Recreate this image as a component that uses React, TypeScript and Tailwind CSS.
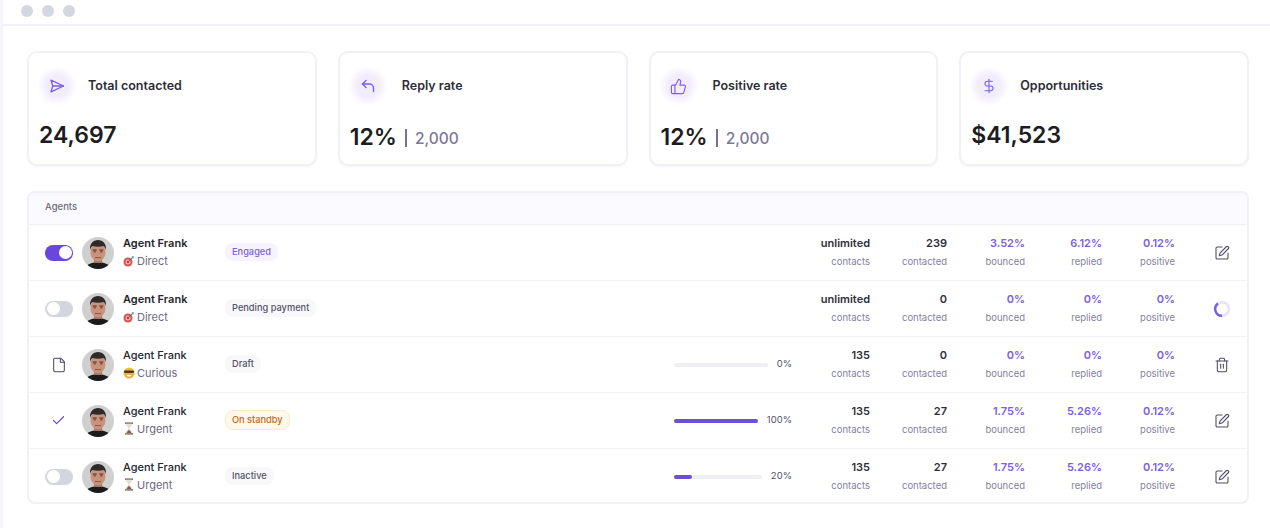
import { Check, DollarSign, File, SquarePen, ThumbsUp, Trash2 } from "lucide-react"
import type { ReactNode } from "react"

function Avatar() {
  return (
    <svg width="32" height="32" viewBox="0 0 32 32" className="shrink-0">
      <defs>
        <clipPath id="avatar-clip">
          <circle cx="16" cy="16" r="16" />
        </clipPath>
      </defs>
      <g clipPath="url(#avatar-clip)">
        <rect width="32" height="32" fill="#cfcfcf" />
        <path d="M3 32c1-5 8-7 13-7s12 2 13 7z" fill="#1b1b1e" />
        <rect x="12" y="20" width="8" height="6" fill="#a87560" />
        <ellipse cx="16" cy="15" rx="7.500" ry="9.500" fill="#c8927c" />
        <path d="M8.200 13c-1-6 3-10 7.800-10s8.800 4 7.800 10c-.6-2.300-1.300-3.500-2.600-3.900-3 .7-7.400.7-10.400 0-1.300.4-2 1.600-2.600 3.900z" fill="#2f2a27" />
        <rect x="10.800" y="12.500" width="3.800" height="1.100" fill="#4a3029" />
        <rect x="17.400" y="12.500" width="3.800" height="1.100" fill="#4a3029" />
        <rect x="11.500" y="14.300" width="2.400" height="1" fill="#5c3d33" />
        <rect x="18.100" y="14.300" width="2.400" height="1" fill="#5c3d33" />
        <rect x="13" y="20.200" width="6" height="0.900" fill="#8a4f45" />
      </g>
    </svg>
  )
}

function Dart() {
  return (
    <svg width="12" height="12" viewBox="0 0 12 12" className="shrink-0">
      <circle cx="5" cy="7" r="4.500" fill="#d9534f" />
      <circle cx="5" cy="7" r="2.500" fill="#f2b8b5" />
      <circle cx="5" cy="7" r="1.300" fill="#c73a36" />
      <path d="M5 7l4.500-4.500" stroke="#55606a" strokeWidth="0.9" />
      <path d="M9 1l2 .5-.8 2.300-1.700-.6z" fill="#3fb6c4" />
    </svg>
  )
}

function Cool() {
  return (
    <svg width="12" height="12" viewBox="0 0 12 12" className="shrink-0">
      <circle cx="6" cy="6" r="5.500" fill="#f5b83d" />
      <rect x="1" y="3.500" width="10" height="2.600" rx="1" fill="#4a3a20" />
      <path d="M3 7.500h6c0 1.500-1.300 2.500-3 2.500S3 9 3 7.500z" fill="#fff" stroke="#9a6a1c" strokeWidth="0.4" />
    </svg>
  )
}

function Hourglass() {
  return (
    <svg width="12" height="13" viewBox="0 0 12 13" className="shrink-0">
      <rect x="2" y="0.500" width="8" height="1.300" fill="#6b5348" />
      <rect x="2" y="11.200" width="8" height="1.300" fill="#6b5348" />
      <path d="M3 1.800h6c0 2.500-2 3.500-2.400 4.700.4 1.200 2.400 2.200 2.400 4.700H3c0-2.500 2-3.500 2.400-4.700C5 5.300 3 4.300 3 1.800z" fill="#e6e0da" />
      <path d="M3.500 11.200c.2-1.600 1.700-2.600 2.500-3.300.8.700 2.300 1.700 2.500 3.300z" fill="#8d5a3c" />
    </svg>
  )
}

function Spinner() {
  return (
    <svg width="18" height="18" viewBox="0 0 18 18">
      <circle cx="9" cy="9" r="6.800" fill="none" stroke="#e6e0f8" strokeWidth="2.400" />
      <path d="M9 15.800A6.800 6.800 0 0 1 5 3.500" fill="none" stroke="#7a5fe0" strokeWidth="2.400" />
    </svg>
  )
}

function PlaneIcon() {
  return (
    <svg width="16" height="16" viewBox="0 0 16 16" fill="none" stroke="currentColor" strokeWidth="1.300" strokeLinejoin="round" strokeLinecap="round">
      <path d="M2 2.200L14.500 8 2 13.800 3.800 8z" />
      <path d="M3.800 8h10.700" />
    </svg>
  )
}

function ReplyIcon() {
  return (
    <svg width="16" height="16" viewBox="0 0 16 16" fill="none" stroke="currentColor" strokeWidth="1.400" strokeLinejoin="round" strokeLinecap="round">
      <path d="M6 2.500L2.500 6 6 9.500" />
      <path d="M2.500 6h7a4 4 0 0 1 4 4v3.500" />
    </svg>
  )
}

function Toggle({ on }: { on?: boolean }) {
  return (
    <div className={`flex h-[16px] w-[28px] items-center rounded-full px-[1.500px] ${on ? "justify-end bg-[#6b46dc]" : "justify-start bg-[#d3d6de]"}`}>
      <div className="h-[13px] w-[13px] rounded-full bg-white" />
    </div>
  )
}

function StatCard({ icon, title, titleClass, value, extra }: { icon: ReactNode; title: string; titleClass: string; value: string; extra?: string }) {
  return (
    <div className="h-[115px] rounded-[10px] border-2 border-[#f2f0f7] bg-white pl-[10px] pt-[13px] shadow-[0_1px_2px_rgba(90,80,140,0.06)]">
      <div className="-ml-[2px] flex items-center">
        <div className="flex h-[40px] w-[40px] items-center justify-center rounded-full bg-[radial-gradient(circle_closest-side,#f2edfd_55%,#ffffff_100%)] text-[#7a5fe8]">
          {icon}
        </div>
        <div className={`text-[12.500px] font-semibold text-[#2d2d38] ${titleClass}`}>{title}</div>
      </div>
      <div className="mt-[13px] flex items-center text-[23px] leading-[32px] font-semibold text-[#1c1c22]">
        <span>{value}</span>
        {extra && (
          <>
            <span className="ml-[8px] mt-[2px] h-[18px] w-[2px] bg-[#76728f]" />
            <span className="ml-[8px] mt-[4px] text-[15.500px] font-medium text-[#7b779a]">{extra}</span>
          </>
        )}
      </div>
    </div>
  )
}

function Stat({ value, label, width, accent }: { value: string; label: string; width: string; accent?: boolean }) {
  return (
    <div className={`${width} shrink-0 pb-[1px] text-right`}>
      <div className={`text-[11px] leading-[16px] font-semibold ${accent ? "text-[#7a5fe0]" : "text-[#2f2f3a]"}`}>{value}</div>
      <div className="mt-[4px] text-[9.500px] leading-[14px] text-[#84829a]">{label}</div>
    </div>
  )
}

type Agent = {
  status: ReactNode
  bold?: boolean
  emoji: ReactNode
  mood: string
  badge: string
  badgeClass: string
  progress?: number
  limit: string
  contacted: string
  bounced: string
  replied: string
  positive: string
  action: ReactNode
}

const editIcon = <SquarePen size={16} strokeWidth={1.600} className="text-[#4e4a66]" />

const agents: Agent[] = [
  {
    status: <Toggle on />,
    bold: true,
    emoji: <Dart />,
    mood: "Direct",
    badge: "Engaged",
    badgeClass: "bg-[#f6f3fe] px-[7px] text-[#7a5fe0]",
    limit: "unlimited",
    contacted: "239",
    bounced: "3.52%",
    replied: "6.12%",
    positive: "0.12%",
    action: editIcon,
  },
  {
    status: <Toggle />,
    bold: true,
    emoji: <Dart />,
    mood: "Direct",
    badge: "Pending payment",
    badgeClass: "bg-[#f8f8fb] px-[7px] text-[#55536a]",
    limit: "unlimited",
    contacted: "0",
    bounced: "0%",
    replied: "0%",
    positive: "0%",
    action: <Spinner />,
  },
  {
    status: <File size={16} strokeWidth={1.600} className="ml-[6px] text-[#4e4a66]" />,
    emoji: <Cool />,
    mood: "Curious",
    badge: "Draft",
    badgeClass: "bg-[#f8f8fb] px-[7px] text-[#55536a]",
    progress: 0,
    limit: "135",
    contacted: "0",
    bounced: "0%",
    replied: "0%",
    positive: "0%",
    action: <Trash2 size={16} strokeWidth={1.600} className="text-[#4e4a66]" />,
  },
  {
    status: <Check size={15} strokeWidth={2} className="ml-[6px] text-[#6b4fe0]" />,
    emoji: <Hourglass />,
    mood: "Urgent",
    badge: "On standby",
    badgeClass: "border border-[#fde9c4] bg-[#fff9ec] px-[6px] text-[#c9651c]",
    progress: 100,
    limit: "135",
    contacted: "27",
    bounced: "1.75%",
    replied: "5.26%",
    positive: "0.12%",
    action: editIcon,
  },
  {
    status: <Toggle />,
    emoji: <Hourglass />,
    mood: "Urgent",
    badge: "Inactive",
    badgeClass: "bg-[#f8f8fb] px-[7px] text-[#55536a]",
    progress: 20,
    limit: "135",
    contacted: "27",
    bounced: "1.75%",
    replied: "5.26%",
    positive: "0.12%",
    action: editIcon,
  },
]

function AgentRow({ agent, last }: { agent: Agent; last: boolean }) {
  return (
    <div className={`flex items-center pl-[16px] ${last ? "h-[53px] pt-[2px]" : "h-[56px] border-b border-[#f1f0f5]"}`}>
      <div className="w-[37px] shrink-0">{agent.status}</div>
      <div className="w-[41px] shrink-0">
        <Avatar />
      </div>
      <div className="w-[102px] shrink-0 pb-[2px]">
        <div className={`text-[11px] leading-[16px] text-[#26262f] ${agent.bold ? "font-semibold" : "font-medium"}`}>Agent Frank</div>
        <div className="mt-[2px] flex items-center gap-[2px] text-[11px] leading-[16px] text-[#6e6a85]">
          {agent.emoji}
          <span>{agent.mood}</span>
        </div>
      </div>
      <div className="flex min-w-0 flex-1 items-center pb-[2px]">
        <span className={`rounded-[8px] py-[2px] text-[9.250px] leading-[14px] font-medium ${agent.badgeClass}`}>{agent.badge}</span>
      </div>
      <div className="flex w-[118px] shrink-0 items-center">
        {agent.progress !== undefined && (
          <>
            <div className="h-[4px] min-w-0 flex-1 rounded-full bg-[#f0eff4]">
              <div className="h-full rounded-full bg-[#6b4fdc]" style={{ width: `${agent.progress}%` }} />
            </div>
            <div className="ml-[9px] text-[9.500px] text-[#55536a]">{agent.progress}%</div>
          </>
        )}
      </div>
      <Stat value={agent.limit} label="contacts" width="w-[78px]" />
      <Stat value={agent.contacted} label="contacted" width="w-[77px]" />
      <Stat value={agent.bounced} label="bounced" width="w-[78px]" accent />
      <Stat value={agent.replied} label="replied" width="w-[77px]" accent />
      <Stat value={agent.positive} label="positive" width="w-[73px]" accent />
      <div className="flex w-[72px] shrink-0 justify-center pl-[22px]">{agent.action}</div>
    </div>
  )
}

export default function App() {
  return (
    <div className="h-[528px] w-[1270px] overflow-hidden bg-white font-['Inter',sans-serif]">
      <div className="h-full border-l-[3px] border-[#f5f4f9]">
        <div className="flex h-[26px] items-center gap-[9px] border-b-2 border-[#f1f0f6] pb-[3px] pl-[18px]">
          <div className="h-[12px] w-[12px] rounded-full bg-[#d2d7e0]" />
          <div className="h-[12px] w-[12px] rounded-full bg-[#d2d7e0]" />
          <div className="h-[12px] w-[12px] rounded-full bg-[#d2d7e0]" />
        </div>
        <div className="w-[1246px] pl-[24px] pt-[25px]">
          <div className="grid grid-cols-4 gap-[21px]">
            <StatCard icon={<PlaneIcon />} title="Total contacted" titleClass="ml-[11px]" value="24,697" />
            <StatCard icon={<ReplyIcon />} title="Reply rate" titleClass="ml-[14px]" value="12%" extra="2,000" />
            <StatCard icon={<ThumbsUp size={17} strokeWidth={1.600} />} title="Positive rate" titleClass="ml-[14px]" value="12%" extra="2,000" />
            <StatCard icon={<DollarSign size={16} strokeWidth={1.600} />} title="Opportunities" titleClass="ml-[11px]" value="$41,523" />
          </div>
          <div className="mt-[25px] overflow-hidden rounded-[8px] border-2 border-[#f2f0f7] bg-white">
            <div className="flex h-[32px] items-center border-b border-[#efeef4] bg-[#fbfafe] pb-[3px] pl-[16px] text-[9.500px] font-medium text-[#6b6a7a]">Agents</div>
            {agents.map((agent, i) => (
              <AgentRow key={i} agent={agent} last={i === agents.length - 1} />
            ))}
          </div>
        </div>
      </div>
    </div>
  )
}
